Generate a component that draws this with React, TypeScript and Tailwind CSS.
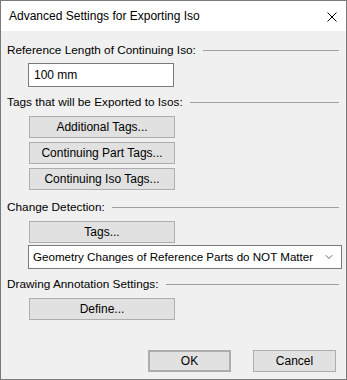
import { ChevronDown } from 'lucide-react';

const font = { fontFamily: '"Liberation Sans", Arial, sans-serif' };

function SectionHeader({ label, className = '' }: { label: string; className?: string }) {
  return (
    <div className={`flex h-4 items-center ${className}`}>
      <span className="whitespace-nowrap text-[11.8px] leading-4 text-black">{label}</span>
      <div className="ml-[7px] h-px flex-1 bg-[#a0a0a0]" />
    </div>
  );
}

function DlgButton({ label, className = '' }: { label: string; className?: string }) {
  return (
    <button className={`flex h-[22px] items-center justify-center border border-[#adadad] bg-[#e1e1e1] text-[12px] text-black ${className}`}>
      {label}
    </button>
  );
}

export default function App() {
  return (
    <div
      className="flex h-[380px] w-[347px] flex-col overflow-hidden border border-[#7a7a7a] bg-[#f0f0f0]"
      style={font}
    >
      <div className="flex h-[30px] shrink-0 items-center justify-between bg-white pl-2 pr-[9px]">
        <span className="text-[12px] text-black">Advanced Settings for Exporting Iso</span>
        <svg width="10" height="10" viewBox="0 0 10 10" className="mt-px">
          <path d="M0.5 0.5 L9.5 9.5 M9.5 0.5 L0.5 9.5" stroke="#000" strokeWidth="1" />
        </svg>
      </div>

      <div className="flex flex-1 flex-col pl-[6px] pr-[7px] pt-[11px]">
        <SectionHeader label="Reference Length of Continuing Iso:" />
        <div className="ml-[21px] mt-[5px] flex h-6 w-[146px] items-center border border-[#7a7a7a] bg-white pl-[5px] text-[12px] text-black">
          100 mm
        </div>

        <SectionHeader label="Tags that will be Exported to Isos:" className="mt-[7px]" />
        <div className="ml-[22px] mt-[6px] flex w-[146px] flex-col gap-1">
          <DlgButton label="Additional Tags..." />
          <DlgButton label="Continuing Part Tags..." />
          <DlgButton label="Continuing Iso Tags..." />
        </div>

        <SectionHeader label="Change Detection:" className="mt-[9px]" />
        <DlgButton label="Tags..." className="ml-[22px] mt-[6px] w-[146px]" />
        <div className="ml-[21px] mr-[-3px] mt-[2px] flex h-6 items-center justify-between border border-[#7a7a7a] bg-white pl-[4px] pr-[6px] text-black">
          <span className="whitespace-nowrap text-[11.6px]">Geometry Changes of Reference Parts do NOT Matter</span>
          <ChevronDown size={12} strokeWidth={1.5} color="#333" />
        </div>

        <SectionHeader label="Drawing Annotation Settings:" className="mt-[7px]" />
        <DlgButton label="Define..." className="ml-[22px] mt-[6px] w-[146px]" />

        <div className="mt-[30px] flex justify-end gap-[22px] pr-[3px]">
          <DlgButton label="OK" className="w-[83px] border-2 border-[#0078d7]" />
          <DlgButton label="Cancel" className="w-[83px]" />
        </div>
      </div>
    </div>
  );
}
